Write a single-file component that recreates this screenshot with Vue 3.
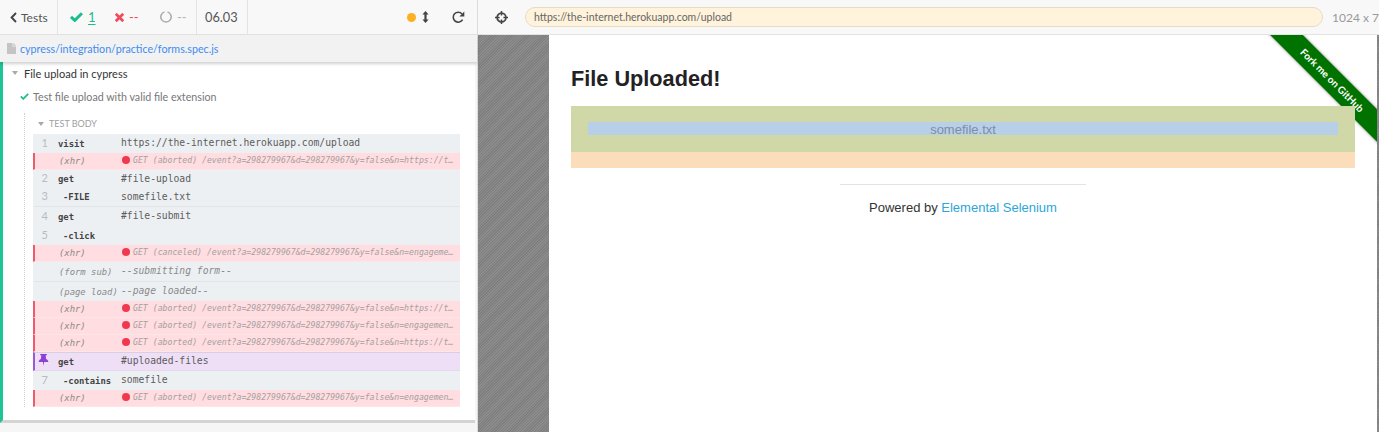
<script setup>
const rows = [
  { num: '1', name: 'visit', msg: 'https://the-internet.herokuapp.com/upload' },
  { xhr: true, msg: 'GET (aborted) /event?a=298279967&d=298279967&y=false&n=https://the-internet.herokuapp.com/upload' },
  { num: '2', name: 'get', msg: '#file-upload', cls: 'short' },
  { num: '3', name: '-FILE', msg: 'somefile.txt', child: true, cls: 'lined' },
  { num: '4', name: 'get', msg: '#file-submit' },
  { num: '5', name: '-click', msg: '', child: true },
  { xhr: true, msg: 'GET (canceled) /event?a=298279967&d=298279967&y=false&n=engagement&p=https://the-internet' },
  { name: '(form sub)', msg: '--submitting form--', cls: 'event tall lined' },
  { name: '(page load)', msg: '--page loaded--', cls: 'event' },
  { xhr: true, msg: 'GET (aborted) /event?a=298279967&d=298279967&y=false&n=https://the-internet.herokuapp.com/upload' },
  { xhr: true, msg: 'GET (aborted) /event?a=298279967&d=298279967&y=false&n=engagement&p=https://the-internet' },
  { xhr: true, msg: 'GET (aborted) /event?a=298279967&d=298279967&y=false&n=https://the-internet.herokuapp.com/upload' },
  { pin: true, name: 'get', msg: '#uploaded-files', cls: 'pinned' },
  { num: '7', name: '-contains', msg: 'somefile', child: true },
  { xhr: true, msg: 'GET (aborted) /event?a=298279967&d=298279967&y=false&n=engagement&p=https://the-internet' },
]
</script>

<template>
  <div class="app">
    <section class="reporter">
      <header class="toolbar">
        <div class="seg back">
          <svg width="7" height="11" viewBox="0 0 7 11"><path d="M6 1 1.6 5.5 6 10" fill="none" stroke="#444" stroke-width="1.9"/></svg>
          <span>Tests</span>
        </div>
        <div class="seg stats">
          <svg class="i-check" width="13" height="10" viewBox="0 0 13 10"><path d="M1 4.8 4.8 8.4 12 1.2" fill="none" stroke="#1dbd8d" stroke-width="3"/></svg>
          <span class="passed">1</span>
          <svg class="i-x" width="9" height="9" viewBox="0 0 9 9"><path d="M.8 .8 8.2 8.2M8.2 .8 .8 8.2" fill="none" stroke="#ef4d5f" stroke-width="2.8"/></svg>
          <span class="failed">--</span>
          <svg class="i-ring" width="12" height="12" viewBox="0 0 12 12"><path d="M7.5 .9A5.2 5.2 0 1 1 4.5 .9" fill="none" stroke="#a8a8a8" stroke-width="1.5"/></svg>
          <span class="pending">--</span>
        </div>
        <div class="seg duration">06.03</div>
        <div class="controls">
          <span class="dot"></span>
          <svg class="i-arrows" width="7" height="12" viewBox="0 0 7 12"><path d="M3.5 0 6.6 3.4H4.6V8.6H6.6L3.5 12 .4 8.6H2.4V3.4H.4Z" fill="#444"/></svg>
          <svg class="i-reload" width="13" height="13" viewBox="0 0 13 13"><path d="M10.6 8.6A5 5 0 1 1 10 2.9" fill="none" stroke="#444" stroke-width="1.6"/><path d="M12.3 .5V5.4H7.4Z" fill="#444"/></svg>
        </div>
      </header>

      <div class="spec">
        <svg width="9" height="11" viewBox="0 0 9 11"><path d="M0 0H5.5V3.5H9V11H0ZM6.3 0 9 2.7H6.3Z" fill="#c4c4c4"/></svg>
        <a>cypress/integration/practice/forms.spec.js</a>
      </div>

      <div class="runnables">
        <div class="suite-title"><i class="tri"></i><span>File upload in cypress</span></div>
        <div class="test-title">
          <svg width="9" height="7" viewBox="0 0 9 7"><path d="M.8 3.4 3.3 5.8 8.2 .9" fill="none" stroke="#1dbd8d" stroke-width="1.8"/></svg>
          <span>Test file upload with valid file extension</span>
        </div>
        <div class="instruments">
          <div class="hook"><i class="tri small"></i><span>TEST BODY</span></div>
          <div class="log">
            <div
              v-for="(r, i) in rows"
              :key="i"
              class="row"
              :class="[r.cls, { xhr: r.xhr, child: r.child }]"
            >
              <span class="num">
                <svg v-if="r.pin" width="11" height="12" viewBox="0 0 11 12"><path d="M2.2 0H8.8V1.3H7.7L8.1 5C9.5 5.7 10.3 6.7 10.3 7.9H6.1L5.5 12 4.9 7.9H.7C.7 6.7 1.5 5.7 2.9 5L3.3 1.3H2.2Z" fill="#8e3fd6"/></svg>
                <template v-else>{{ r.num }}</template>
              </span>
              <span class="name">{{ r.xhr ? '(xhr)' : r.name }}</span>
              <span class="msg">
                <i v-if="r.xhr" class="red"></i>
                <span class="msg-text">{{ r.msg }}</span>
              </span>
            </div>
          </div>
        </div>
      </div>
    </section>

    <section class="runner">
      <header class="urlbar">
        <svg class="i-cross" width="13" height="13" viewBox="0 0 13 13"><circle cx="6.5" cy="6.5" r="4.4" fill="none" stroke="#444" stroke-width="1.7"/><path d="M6.5 0V4.6M6.5 8.4V13M0 6.5H4.6M8.4 6.5H13" stroke="#444" stroke-width="1.5"/></svg>
        <div class="url">https://the-internet.herokuapp.com/upload</div>
        <div class="viewport">1024 x 768</div>
      </header>
      <div class="stage">
        <div class="page">
          <div class="ribbon-clip"><div class="ribbon">Fork me on GitHub</div></div>
          <h3>File Uploaded!</h3>
          <div class="highlight">
            <div class="content">somefile.txt</div>
          </div>
          <div class="foot">
            <hr />
            <p>Powered by <a>Elemental Selenium</a></p>
          </div>
        </div>
      </div>
    </section>
  </div>
</template>

<style>
html, body { margin: 0; background: #fff; overflow: hidden; }
</style>

<style scoped>
.app { display: flex; width: 1379px; height: 432px; overflow: hidden; font-family: Lato, "Open Sans", sans-serif; }
svg { display: block; flex: none; }

.reporter { width: 477px; height: 432px; flex: none; background: #f6f6f6; border-right: 1px solid #dcdcdc; box-sizing: content-box; display: flex; flex-direction: column; }

.toolbar { height: 34px; flex: none; display: flex; align-items: center; background: #f8f8f8; border-bottom: 1px solid #e3e3e3; color: #555; font-size: 12px; }
.seg { height: 34px; display: flex; align-items: center; box-sizing: border-box; border-right: 1px solid #e3e3e3; }
.back { width: 58px; padding-left: 10px; gap: 4px; }
.stats { width: 139px; padding-left: 12px; font-size: 13px; }
.passed { margin-left: 5px; color: #1dbd8d; text-decoration: underline; text-underline-offset: 2px; width: 7px; }
.i-x { margin-left: 20px; }
.failed { margin-left: 5px; color: #ef4d5f; width: 10px; }
.i-ring { margin-left: 21px; }
.pending { margin-left: 5px; color: #b5b5b5; }
.duration { width: 51px; padding-left: 8px; font-size: 12.8px; color: #555; }
.controls { flex: 1; display: flex; align-items: center; padding-left: 159px; }
.dot { width: 9px; height: 9px; border-radius: 50%; background: #fdb022; }
.i-arrows { margin-left: 6px; }
.i-reload { margin-left: 23px; }

.spec { height: 27px; flex: none; display: flex; align-items: center; gap: 4px; padding-left: 7px; background: #f2f2f2; box-shadow: 0 2px 3px rgba(0,0,0,.18); position: relative; z-index: 1; font-size: 10.7px; }
.spec a { color: #3e8cf0; }

.runnables { height: 361px; flex: none; box-sizing: border-box; background: #fff; border-left: 3px solid #1dc595; border-bottom: 3px solid #d4d4d4; margin-right: 2px; }
.suite-title { height: 24px; box-sizing: border-box; padding: 0 0 2px 9px; display: flex; align-items: center; gap: 6px; font-size: 11px; color: #333; }
.tri { width: 0; height: 0; border-left: 3.5px solid transparent; border-right: 3.5px solid transparent; border-top: 4px solid #aaa; display: block; }
.test-title { height: 24px; box-sizing: border-box; padding: 0 0 3px 17px; display: flex; align-items: center; gap: 4px; font-size: 10.7px; color: #777; }
.instruments { margin: 3px 0 0 21px; padding-left: 8px; border-left: 1px dotted #d0d0d0; width: 427px; }
.hook { height: 21px; display: flex; align-items: center; padding-left: 5px; gap: 5px; font-size: 9px; color: #a0a0a0; }

.log { width: 427px; }
.row { height: 19px; display: flex; align-items: center; background: #edf0f3; box-sizing: border-box; border-left: 2px solid transparent; font-family: "DejaVu Sans Mono", "Liberation Mono", monospace; color: #5c5c5c; }
.row.short { height: 18px; }
.row.tall { height: 20px; }
.row.lined { border-bottom: 1px solid #e2e5e8; }
.num { width: 13px; flex: none; display: flex; justify-content: flex-end; padding-bottom: 3px; color: #b8bcbf; font-family: Lato, sans-serif; font-size: 11px; }
.name { width: 63px; flex: none; margin-left: 10px; box-sizing: border-box; font-size: 8.9px; font-weight: 700; color: #444; white-space: nowrap; }
.child .name { padding-left: 5px; }
.msg { flex: 1; min-width: 0; display: flex; align-items: center; font-size: 9.7px; padding-bottom: 2px; padding-right: 5px; }
.msg-text { white-space: nowrap; overflow: hidden; text-overflow: ellipsis; }

.xhr { height: 17px; background: #ffdde0; border-left-color: #ee5a6c; border-bottom: 1px solid #fbe6e8; color: #999; }
.xhr .name, .event .name { font-weight: 400; font-style: italic; color: #8a8a8a; padding-left: 1px; }
.xhr .msg { font-size: 8.2px; font-style: italic; color: #a6a0a0; }
.event .msg { font-style: italic; color: #8a8a8a; }
.red { width: 8px; height: 8px; margin: 0 3px 0 1px; border-radius: 50%; background: #f0384f; flex: none; }

.pinned { background: #eedff7; border-left-color: #9b59d6; border-top: 1px solid #d8cfe2; border-bottom: 1px solid #e5d8ee; }
.pinned .num { justify-content: flex-start; margin-left: 3px; width: 12px; margin-right: -2px; }

.runner { flex: 1; min-width: 0; display: flex; flex-direction: column; }
.urlbar { height: 34px; flex: none; display: flex; align-items: center; background: #f8f8f8; border-bottom: 1px solid #e3e3e3; padding-left: 17px; }
.url { width: 798px; height: 20px; margin-left: 17px; box-sizing: border-box; flex: none; border: 1px solid #e6dcc6; border-radius: 10px; background: #fff3dc; padding-left: 8px; line-height: 18px; font-size: 10.5px; color: #666; }
.viewport { margin-left: 9px; font-size: 12px; color: #999; white-space: nowrap; }

.stage { flex: 1; min-height: 0; padding: 0 2px 0 71px; background: repeating-linear-gradient(-45deg, #8c8c8c 0 1px, #7f7f7f 1px 2px); }
.page { position: relative; height: 100%; background: #fff; padding: 0 22px; box-sizing: border-box; font-family: "Liberation Sans", Arial, sans-serif; overflow: hidden; }
.ribbon-clip { position: absolute; top: 0; right: 0; width: 110px; height: 110px; overflow: hidden; }
.ribbon { position: absolute; left: -15px; top: 34px; width: 160px; height: 23px; line-height: 23px; text-align: center; background: #007200; color: #fff; transform: rotate(45deg); font-family: Lato, sans-serif; font-weight: 700; font-size: 10px; box-shadow: 0 0 3px rgba(0,0,0,.5); }
h3 { margin: 0; padding-top: 31px; height: 40px; font-size: 21.7px; line-height: 25px; font-weight: 700; color: #222; }
.highlight { position: relative; height: 46px; padding-top: 16px; box-sizing: border-box; background: #d0d8a8; box-shadow: 0 16px 0 #fbdcbb; }
.content { margin: 0 17px; height: 13px; background: #b8cfe8; text-align: center; font-size: 13px; line-height: 15px; color: #7b8ea5; }
.foot { margin-top: 32px; text-align: center; }
hr { width: 246px; height: 1px; margin: 0 auto; border: 0; background: #e3e3e3; }
p { margin: 15px 0 0; font-size: 13px; line-height: 16px; color: #333; }
p a { color: #2ea6d8; }
</style>
